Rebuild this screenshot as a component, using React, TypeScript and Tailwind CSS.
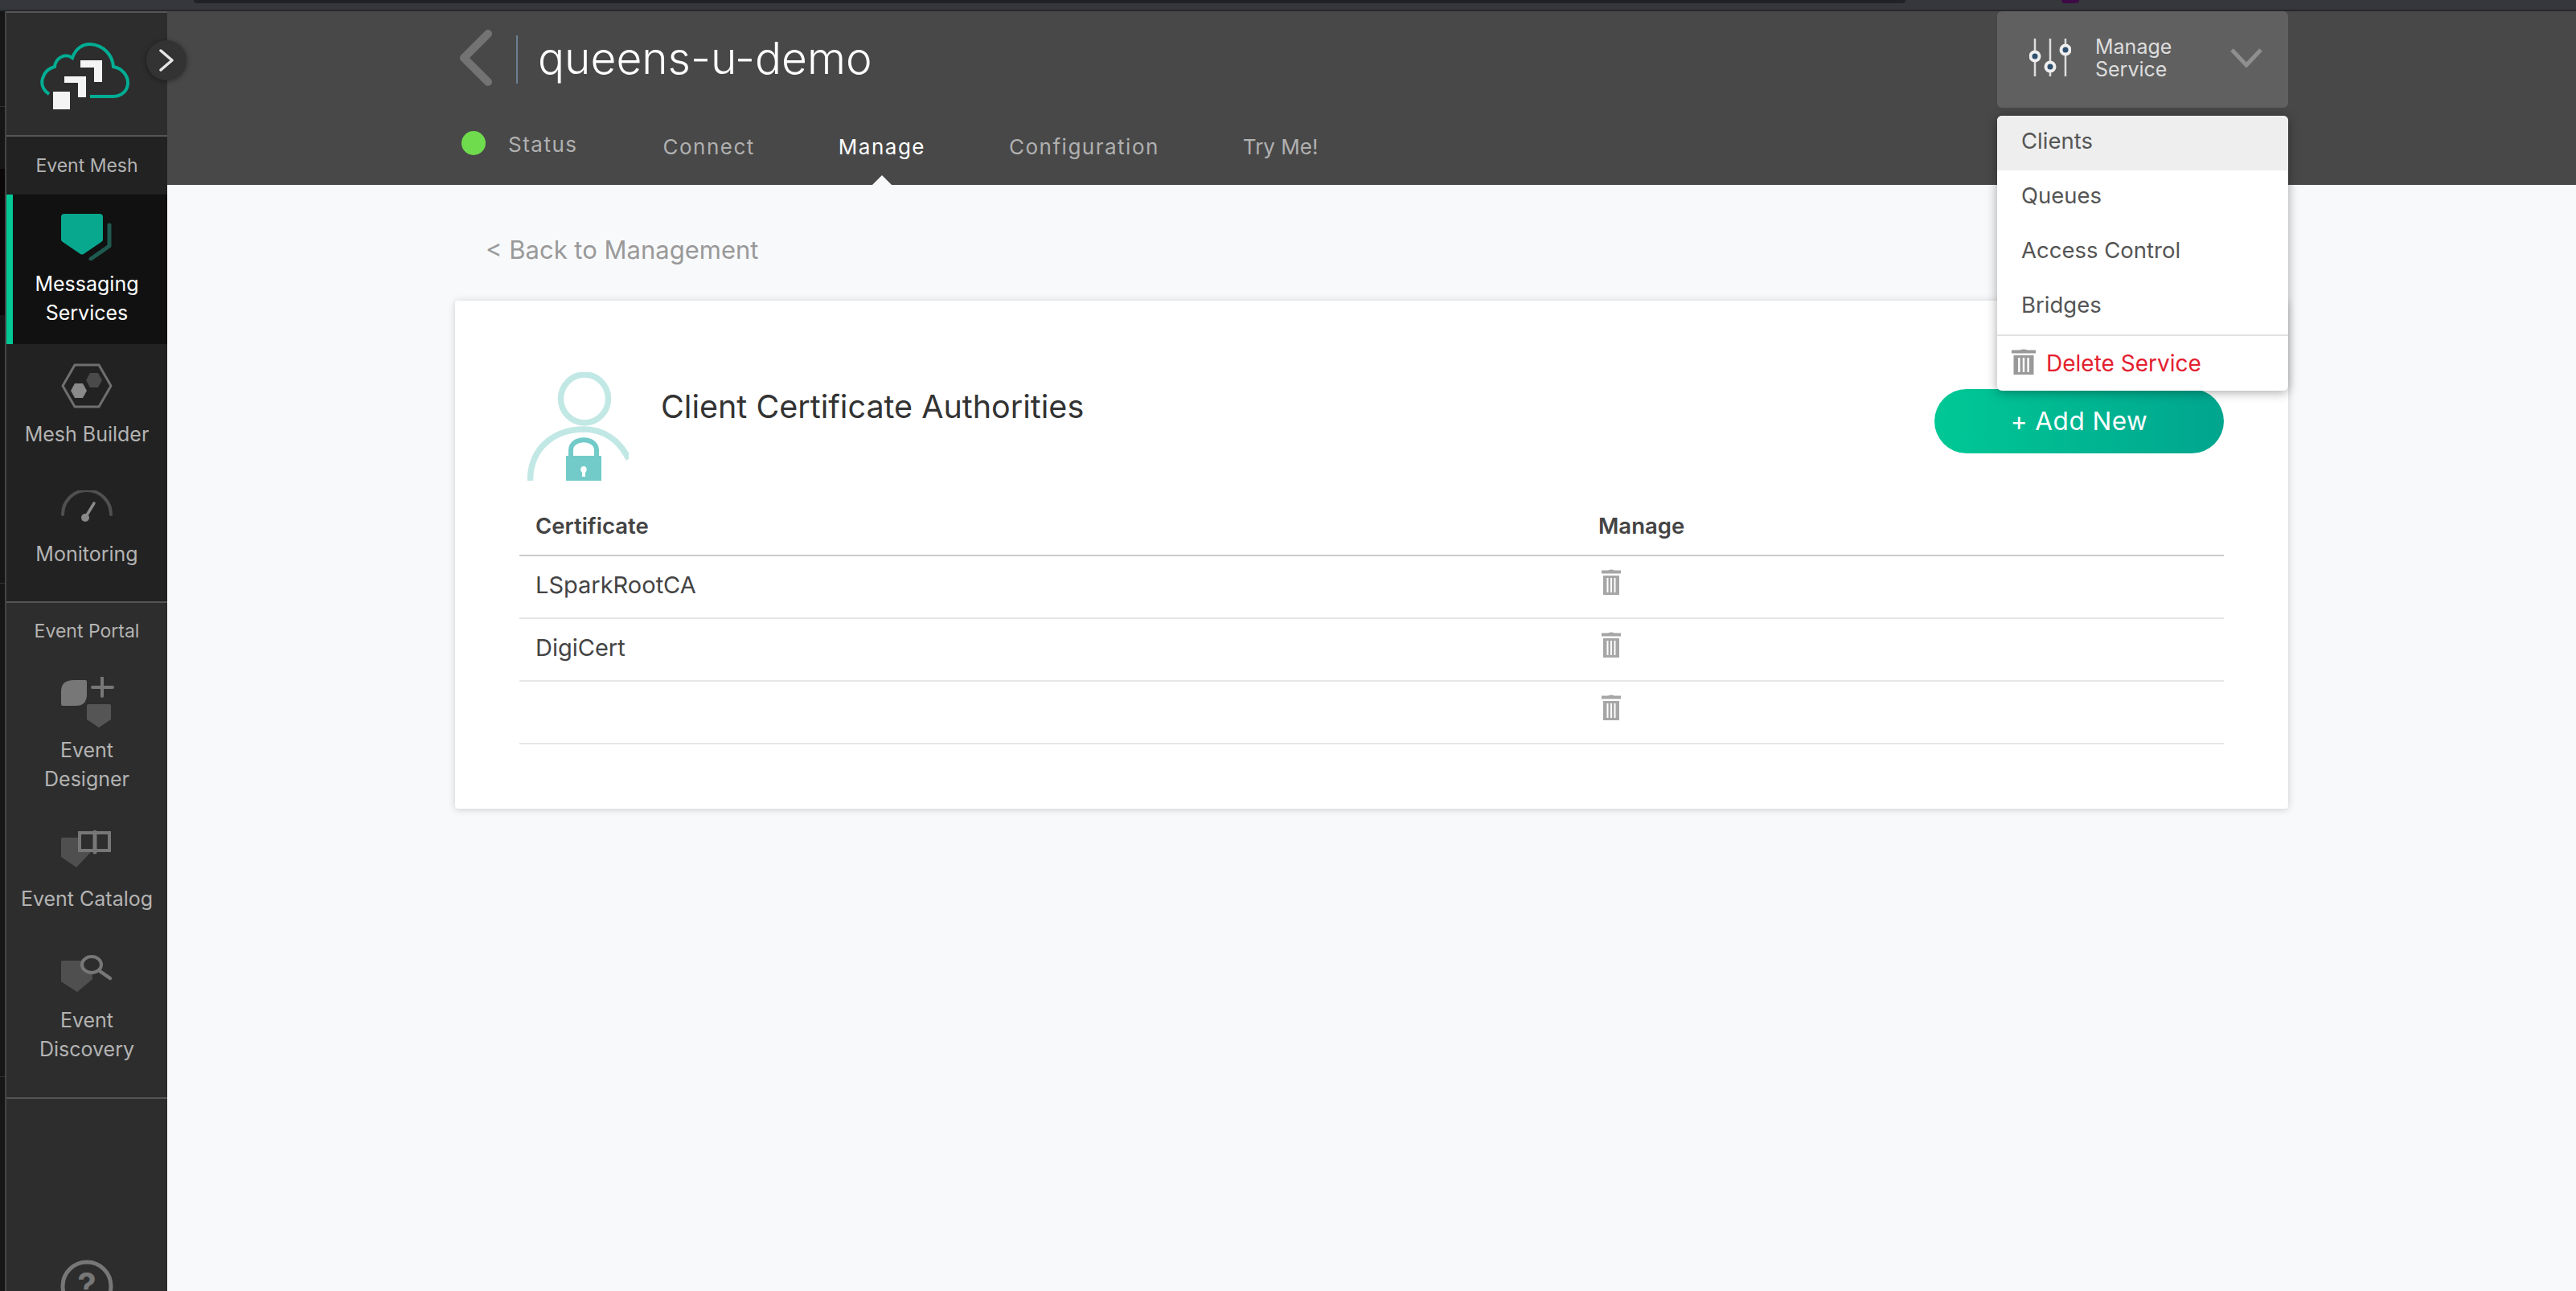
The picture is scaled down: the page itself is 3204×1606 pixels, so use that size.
import type { ReactNode } from 'react';

const TrashIcon = ({ className }: { className: string }) => (
    <svg viewBox="0 0 24 32" preserveAspectRatio="none" className={className} fill="currentColor">
        <path d="M8 1.5 Q12 -0.5 16 1.5 L24 1.5 V5.5 H0 V1.5 Z" />
        <path fillRule="evenodd" d="M2 8 H22 V32 H2 Z M6.5 11 H8.5 V29 H6.5 Z M11 11 H13 V29 H11 Z M15.5 11 H17.5 V29 H15.5 Z" />
    </svg>
);

const CloudLogo = () => (
    <svg viewBox="48 48 120 92" className="w-[120px] h-[92px]">
        <path d="M61 117 C53 112 50 103 54 95 C56 89 61 85 68 83 C69 73 80 65 90 72 C94 60 104 54 113 55 C128 56 140 68 141 83 C152 85 159 94 159 103 C159 113 151 120 140 120 H112" fill="none" stroke="#00ad93" strokeWidth="4" />
        <rect x="66" y="114" width="21" height="22" fill="#f4f4f4" />
        <path d="M80 95 H107 V121 H97 V103 H80 Z" fill="#f4f4f4" />
        <path d="M100 75 H127 V102 H117 V84 H100 Z" fill="#f4f4f4" />
    </svg>
);

const MessagingIcon = () => (
    <svg viewBox="70 262 76 60" className="w-[76px] h-[60px]">
        <path d="M80 264 H124 Q128 264 128 268 V296 Q128 298 126 299 L104 314 Q102 315 100 314 L78 299 Q76 298 76 296 V268 Q76 264 80 264 Z" fill="#08a88f" />
        <path d="M136 278 V304 L113 320" fill="none" stroke="#1f5a50" strokeWidth="5" strokeLinecap="round" strokeLinejoin="round" />
    </svg>
);

const MeshIcon = () => (
    <svg viewBox="70 452 76 56" className="w-[76px] h-[56px]">
        <path d="M78 480 L93 454 H123 L138 480 L123 506 H93 Z" fill="none" stroke="#6f6f6f" strokeWidth="3" strokeLinejoin="round" />
        <path d="M88 486 L93 477 H103 L108 486 L103 495 H93 Z" fill="#8a8a8a" />
        <path d="M107 473 L112 464 H122 L127 473 L122 482 H112 Z" fill="#4a4a4a" />
    </svg>
);

const GaugeIcon = () => (
    <svg viewBox="70 610 76 40" className="w-[76px] h-[40px]">
        <path d="M78 640 A30 30 0 0 1 138 640" fill="none" stroke="#505050" strokeWidth="4" strokeLinecap="round" />
        <path d="M106 644 L117 626" stroke="#8a8a8a" strokeWidth="3.5" strokeLinecap="round" />
        <circle cx="106" cy="644" r="5" fill="#8a8a8a" />
    </svg>
);

const DesignerIcon = () => (
    <svg viewBox="70 842 76 64" className="w-[76px] h-[64px]">
        <path d="M76 860 Q76 846 92 846 H106 Q108 846 108 848 V864 Q108 878 94 878 H78 Q76 878 76 876 Z" fill="#777777" />
        <path d="M127 843 V866 M115 855 H140" stroke="#777777" strokeWidth="4" strokeLinecap="round" />
        <path d="M110 876 H136 Q138 876 138 878 V895 L123 905 L108 895 V878 Q108 876 110 876 Z" fill="#555555" />
    </svg>
);

const CatalogIcon = () => (
    <svg viewBox="70 1033 76 47" className="w-[76px] h-[47px]">
        <path d="M78 1042 H113 V1060 L95 1079 L76 1066 V1044 Q76 1042 78 1042 Z" fill="#4f4f4f" />
        <rect x="99" y="1036" width="37" height="22" fill="#2d2d2d" stroke="#777777" strokeWidth="4" />
        <path d="M118 1035 V1060" stroke="#777777" strokeWidth="5" strokeLinecap="round" />
    </svg>
);

const DiscoveryIcon = () => (
    <svg viewBox="70 1188 76 47" className="w-[76px] h-[47px]">
        <path d="M78 1195 H115 V1218 L96 1234 L76 1221 V1197 Q76 1195 78 1195 Z" fill="#4f4f4f" />
        <ellipse cx="114" cy="1200" rx="12" ry="10" fill="#2d2d2d" stroke="#777777" strokeWidth="4" />
        <path d="M124 1208 L137 1217" stroke="#777777" strokeWidth="4.5" strokeLinecap="round" />
    </svg>
);

const HelpIcon = () => (
    <svg viewBox="0 0 68 68" className="w-[68px] h-[68px] block">
        <circle cx="34" cy="34" r="30" fill="none" stroke="#777777" strokeWidth="5" />
        <text x="34" y="48" textAnchor="middle" fontSize="42" fontWeight="700" fill="#777777">?</text>
    </svg>
);

const SlidersIcon = () => (
    <svg viewBox="0 0 52 48" className="w-[52px] h-[48px] shrink-0">
        <g stroke="#dddddd" strokeWidth="2.5">
            <path d="M7 0 V47 M26 0 V47 M45 0 V47" />
        </g>
        {[[7, 22], [26, 35], [45, 14]].map(([x, y]) => (
            <g key={x}>
                <circle cx={x} cy={y} r="7.5" fill="#eeeeee" />
                <circle cx={x} cy={y} r="3.5" fill="#2f4f70" />
            </g>
        ))}
    </svg>
);

const NavItem = ({ icon, label, className, active }: { icon: ReactNode; label: ReactNode; className: string; active?: boolean }) => (
    <div className={`flex flex-col items-center text-center text-[25px] leading-[36px] ${active ? 'text-white' : 'text-[#b3b3b3]'} ${className}`}>
        {icon}
        {label}
    </div>
);

const Sidebar = () => (
    <aside className="w-[200px] shrink-0 bg-[#2d2d2d] border-t-2 border-[#555555]">
        <div className="h-[152px] flex items-center justify-center pt-1">
            <CloudLogo />
        </div>
        <div className="bg-[#222222] border-t-2 border-b-2 border-t-[#555555] border-b-[#555555] h-[582px]">
            <div className="h-[72px] flex items-center justify-center text-[23px] text-[#b3b3b3]">Event Mesh</div>
            <div className="relative bg-[#111111]">
                <div className="absolute left-0 top-0 bottom-0 w-2 bg-[#00c895]" />
                <NavItem active className="h-[186px] pt-[22px] gap-[11px]" icon={<MessagingIcon />} label={<span>Messaging<br />Services</span>} />
            </div>
            <NavItem className="h-[150px] pt-6 gap-[14px]" icon={<MeshIcon />} label="Mesh Builder" />
            <NavItem className="h-[170px] pt-[32px] gap-[21px]" icon={<GaugeIcon />} label="Monitoring" />
        </div>
        <div className="h-[70px] flex items-center justify-center text-[23px] text-[#b3b3b3]">Event Portal</div>
        <NavItem className="h-[167px] pt-[22px] gap-[9px]" icon={<DesignerIcon />} label={<span>Event<br />Designer</span>} />
        <NavItem className="h-[149px] pt-[46px] gap-[20px]" icon={<CatalogIcon />} label="Event Catalog" />
        <NavItem className="h-[187px] pt-[52px] gap-[16px]" icon={<DiscoveryIcon />} label={<span>Event<br />Discovery</span>} />
        <div className="mt-[42px] border-t-2 border-[#555555] pt-[199px] flex justify-center">
            <HelpIcon />
        </div>
    </aside>
);

const tabs = ['Connect', 'Manage', 'Configuration', 'Try Me!'];

const Header = () => (
    <header className="relative h-[216px] bg-[#484848] px-[358px] shrink-0">
        <div className="flex justify-between h-[120px]">
            <div className="flex items-start pt-[22px]">
                <svg viewBox="0 0 46 72" className="w-[46px] h-[72px]">
                    <path d="M41 6 L11 36 L41 66" fill="none" stroke="#737373" strokeWidth="10" strokeLinecap="round" strokeLinejoin="round" />
                </svg>
                <div className="ml-[30px] mt-2 w-0.5 h-[60px] bg-[#6b7f94]" />
                <h1 className="ml-[25px] text-[55px] leading-[56px] mt-2 font-light text-white">queens-u-demo</h1>
            </div>
            <div className="w-[362px] h-[120px] bg-[#606060] rounded-md flex items-center pl-10 pb-1 text-[25px] leading-[28px] text-[#dddddd]">
                <SlidersIcon />
                <span className="ml-[30px]">Manage<br />Service</span>
                <svg viewBox="0 0 40 24" className="w-10 h-6 ml-auto mr-8">
                    <path d="M2 2 L20 21 L38 2" fill="none" stroke="#8f8f8f" strokeWidth="5" />
                </svg>
            </div>
        </div>
        <nav className="flex items-start h-[67px] mt-[29px] pl-[8px] text-[26px] leading-[40px] tracking-[1.5px] text-[#b0b0b0]">
            <div className="w-[30px] h-[30px] rounded-full bg-[#6fdc4d]" />
            <span className="ml-7 mr-[106px] -mt-[3px]">Status</span>
            <div className="flex gap-[104px]">
                {tabs.map(tab => (
                    <div key={tab} className={`relative h-[67px] ${tab === 'Manage' ? 'text-white' : ''} ${tab === 'Try Me!' ? 'tracking-normal' : ''}`}>
                        {tab}
                        {tab === 'Manage' && (
                            <svg viewBox="0 0 24 12" className="absolute bottom-0 left-1/2 -translate-x-1/2 w-6 h-3">
                                <path d="M0 12 L12 0 L24 12 Z" fill="#f8f9fb" />
                            </svg>
                        )}
                    </div>
                ))}
            </div>
        </nav>
        <div className="absolute top-[130px] right-[358px] w-[362px] h-[342px] z-10 bg-white rounded-md shadow-[0_2px_14px_rgba(0,0,0,0.35)] overflow-hidden text-[27.5px] text-[#555555]">
            {['Clients', 'Queues', 'Access Control', 'Bridges'].map((item, i) => (
                <div key={item} className={`h-[68px] pl-[30px] pb-1 flex items-center ${i === 0 ? 'bg-[#eeeeee]' : ''}`}>{item}</div>
            ))}
            <div className="h-[70px] border-t-2 border-[#e2e2e2] flex items-center pl-[18px]">
                <TrashIcon className="w-[30px] h-[32px] text-[#999999] -mt-[4px]" />
                <span className="ml-[13px] text-[28px] text-[#e3202e]">Delete Service</span>
            </div>
        </div>
    </header>
);

const rows = ['LSparkRootCA', 'DigiCert', ''];

const CertificateCard = () => (
    <div className="bg-white rounded-sm shadow-[0_1px_10px_rgba(0,0,0,0.18)] px-20 pt-[89px] pb-[80px]">
        <div className="flex items-start">
            <svg viewBox="0 0 126 135" className="ml-[10px] w-[126px] h-[135px] shrink-0">
                <ellipse cx="71" cy="33" rx="29.5" ry="30" fill="none" stroke="#c1e8e5" strokeWidth="7.5" />
                <path d="M3.5 135 C3.5 95 32 71 71 71 C94 71 114 84 126 108" fill="none" stroke="#c1e8e5" strokeWidth="7.5" />
                <rect x="48" y="104" width="44" height="31" fill="#72cbc9" />
                <path d="M54 106 V97 C54 80 86 80 86 97 V106" fill="none" stroke="#72cbc9" strokeWidth="6" />
                <path d="M70 117 C66 117 65 122 68 125 V130 H72 V125 C75 122 74 117 70 117 Z" fill="#ffffff" />
            </svg>
            <h2 className="ml-10 mt-[23px] text-[39.5px] leading-10 text-[#333333]">Client Certificate Authorities</h2>
            <button className="ml-auto mt-[21px] w-[360px] h-20 rounded-full bg-gradient-to-r from-[#00c895] to-[#00a58e] text-white text-[31.5px] tracking-[0.5px]">+ Add New</button>
        </div>
        <div className="flex h-[94px] pt-[38px] border-b-2 border-[#cccccc] text-[27.5px] leading-9 font-semibold text-[#444444]">
            <div className="w-[1322px] pl-5">Certificate</div>
            <div className="pl-5">Manage</div>
        </div>
        {rows.map((name, i) => (
            <div key={i} className="flex h-[78px] border-b-2 border-[#e6e6e6] text-[29px] text-[#444444]">
                <div className="w-[1322px] pl-5 pt-4 leading-10">{name}</div>
                <div className="pl-6 pt-4">
                    <TrashIcon className="w-6 h-8 text-[#a6a6a6]" />
                </div>
            </div>
        ))}
    </div>
);

export default function App() {
    return (
        <div className="w-[3204px] h-[1606px] overflow-hidden flex flex-col bg-[#f8f9fb] font-['Inter',sans-serif]">
            {/* browser chrome leftover at the very top */}
            <div className="h-[14px] shrink-0 bg-[#35373c] border-b-2 border-[#26282b] flex items-start">
                <div className="ml-[241px] w-[2129px] h-1 bg-[#202226] rounded-b-md" />
                <div className="ml-[194px] w-[22px] h-1 bg-[#3d0a45] rounded-b-sm" />
            </div>
            <div className="flex flex-1 min-h-0">
                {/* sliver of the window behind */}
                <div className="w-2 shrink-0 bg-[#161616] border-r-2 border-[#444444]">
                    <div className="h-[119px] border-b border-[#333333]" />
                    <div className="h-[77px]" />
                    <div className="h-[182px] bg-[#0b0709]" />
                    <div className="h-[334px] border-b border-[#333333]" />
                    <div className="h-[614px] border-b border-[#333333]" />
                </div>
                <Sidebar />
                <main className="flex-1 min-w-0 flex flex-col relative">
                    <button className="absolute -left-[26px] top-[36px] z-20 w-[50px] h-[50px] rounded-full bg-[#333333] shadow-[0_1px_6px_rgba(0,0,0,0.4)] flex items-center justify-center">
                        <svg viewBox="0 0 20 28" className="w-5 h-7">
                            <path d="M3 2 L17 14 L3 26" fill="none" stroke="#e6e6e6" strokeWidth="3.5" strokeLinecap="round" strokeLinejoin="round" />
                        </svg>
                    </button>
                    <Header />
                    <div className="px-[358px]">
                        <div className="pl-[38px] pt-[61px] mb-[43px] text-[31px] leading-10 text-[#999999]">&lt; Back to Management</div>
                        <CertificateCard />
                    </div>
                </main>
            </div>
        </div>
    );
}
